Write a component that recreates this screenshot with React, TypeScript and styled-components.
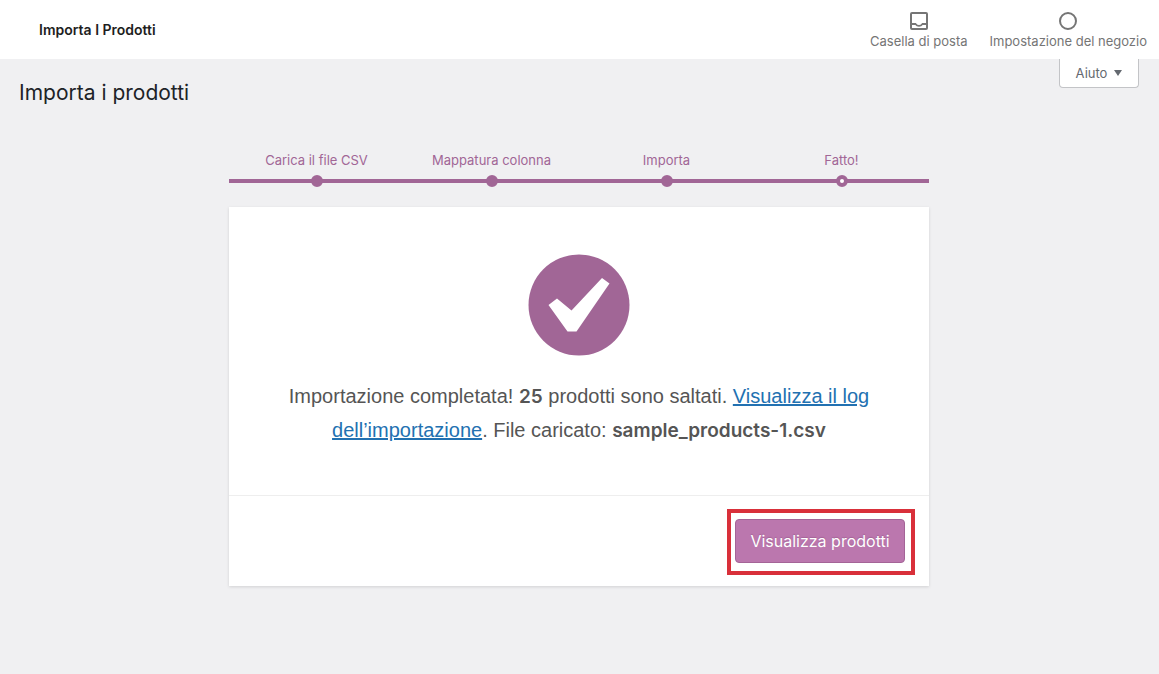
import React from "react";
import styled, { createGlobalStyle } from "styled-components";

const uiFont = 'Inter, "Liberation Sans", sans-serif';

const GlobalStyle = createGlobalStyle`
  *, *::before, *::after { box-sizing: border-box; }
  body {
    margin: 0;
    background: #f0f0f2;
    color: #3c434a;
    font-family: ${uiFont};
    font-size: 13px;
    line-height: 20px;
  }
`;

const TopBar = styled.header`
  display: flex;
  align-items: center;
  justify-content: space-between;
  height: 59px;
  padding: 0 12px 0 39px;
  background: #fff;
`;

const Breadcrumb = styled.div`
  color: #1e1e1e;
  font-size: 14px;
  font-weight: 600;
`;

const Activity = styled.nav`
  display: flex;
  gap: 22px;
  padding-top: 2px;
`;

const ActivityButton = styled.button`
  display: flex;
  flex-direction: column;
  align-items: center;
  padding: 0;
  border: 0;
  background: none;
  color: #757575;
  font: inherit;
  white-space: nowrap;
  cursor: pointer;

  svg { display: block; }
`;

const Content = styled.div`
  padding: 0 20px 0 19px;
`;

const PageHead = styled.div`
  display: flex;
  align-items: flex-start;
  justify-content: space-between;
`;

const PageTitle = styled.h1`
  margin: 18px 0 0;
  color: #1d2327;
  font-size: 21px;
  font-weight: 400;
  line-height: 32px;
`;

const HelpButton = styled.button`
  display: flex;
  align-items: center;
  justify-content: center;
  gap: 7px;
  width: 80px;
  height: 29px;
  padding: 0;
  border: 1px solid #c3c4c7;
  border-top: 0;
  border-radius: 0 0 4px 4px;
  background: #fff;
  color: #646970;
  font: inherit;
  cursor: pointer;
`;

const Importer = styled.main`
  width: 100%;
  max-width: 700px;
  margin: 41px auto 24px;
`;

const Steps = styled.ol`
  display: flex;
  margin: 0 0 20px;
  padding: 0;
  list-style: none;
`;

const Step = styled.li<{ $current?: boolean }>`
  display: flex;
  flex: 1;
  flex-direction: column;
  align-items: center;
  gap: 5px;
  background: linear-gradient(#a16696, #a16696) 0 29px / 100% 4px no-repeat;
  color: #a16696;

  &::after {
    content: "";
    width: 12px;
    height: 12px;
    border: 4px solid #a16696;
    border-radius: 50%;
    background: ${(p) => (p.$current ? "#fff" : "#a16696")};
  }
`;

const Card = styled.section`
  background: #fff;
  box-shadow: 0 1px 3px rgba(0, 0, 0, 0.13);
`;

const Result = styled.div`
  display: flex;
  flex-direction: column;
  align-items: center;
  gap: 23px;
  padding: 47px 48px 48px;
  border-bottom: 1px solid #eee;
`;

const Message = styled.p`
  margin: 0;
  color: #555;
  font-family: "Liberation Sans", Arial, sans-serif;
  font-size: 20px;
  line-height: 34px;
  text-align: center;

  a { color: #2271b1; }

  strong {
    font-family: ${uiFont};
    font-size: 19px;
    font-weight: 600;
    line-height: 20px;
  }
`;

const Actions = styled.div`
  display: flex;
  justify-content: flex-end;
  padding: 13px 14px 11px;
`;

const Highlight = styled.div`
  padding: 6px 6px 8px 4px;
  border: 4px solid #d9303a;
`;

const PrimaryLink = styled.a`
  display: flex;
  align-items: center;
  justify-content: center;
  width: 170px;
  height: 44px;
  border: 1px solid #a46497;
  border-radius: 4px;
  background: #bb77ae;
  color: #fff;
  font-size: 16px;
  text-decoration: none;
  text-shadow: 0 -1px 1px #a46497;
`;

const steps = ["Carica il file CSV", "Mappatura colonna", "Importa", "Fatto!"];

export default function App() {
  return (
    <>
      <GlobalStyle />
      <TopBar>
        <Breadcrumb>Importa I Prodotti</Breadcrumb>
        <Activity>
          <ActivityButton type="button">
            <svg width="20" height="20" viewBox="0 0 20 20" fill="none" stroke="currentColor" strokeWidth="2" aria-hidden="true">
              <rect x="2" y="2" width="16" height="16" rx="1" />
              <path d="M2 13h4.500c2 2.600 5 2.600 7 0H18" strokeWidth="1.800" />
            </svg>
            Casella di posta
          </ActivityButton>
          <ActivityButton type="button">
            <svg width="20" height="20" viewBox="0 0 20 20" fill="none" stroke="currentColor" strokeWidth="2" aria-hidden="true">
              <circle cx="10" cy="10" r="8" />
            </svg>
            Impostazione del negozio
          </ActivityButton>
        </Activity>
      </TopBar>
      <Content>
        <PageHead>
          <PageTitle>Importa i prodotti</PageTitle>
          <HelpButton type="button">
            Aiuto
            <svg width="8" height="6" viewBox="0 0 8 6" fill="currentColor" aria-hidden="true">
              <path d="M0 0h8L4 6z" />
            </svg>
          </HelpButton>
        </PageHead>
        <Importer>
          <Steps>
            {steps.map((label, i) => (
              <Step key={label} $current={i === steps.length - 1}>
                {label}
              </Step>
            ))}
          </Steps>
          <Card>
            <Result>
              <svg width="102" height="102" viewBox="0 0 102 102" aria-hidden="true">
                <circle cx="51" cy="51" r="50.500" fill="#a16696" />
                <path d="M20.500 51 29 44.500 43.500 56.500 74 24 81.500 29.500 48.500 77.500H39.500z" fill="#fff" />
              </svg>
              <Message>
                Importazione completata! <strong>25</strong> prodotti sono saltati.{" "}
                <a href="#log">Visualizza il log dell’importazione</a>. File caricato:{" "}
                <strong>sample_products-1.csv</strong>
              </Message>
            </Result>
            <Actions>
              <Highlight>
                <PrimaryLink href="#products">Visualizza prodotti</PrimaryLink>
              </Highlight>
            </Actions>
          </Card>
        </Importer>
      </Content>
    </>
  );
}
